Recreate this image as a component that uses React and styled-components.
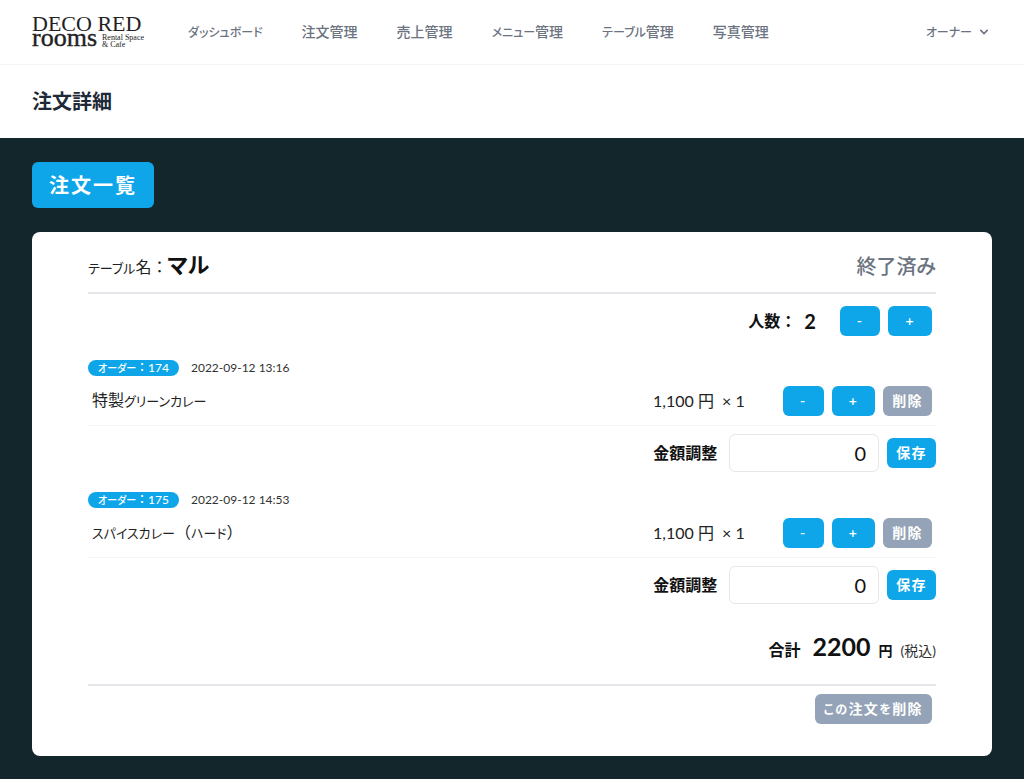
import React, { useState } from "react";
import styled, { createGlobalStyle } from "styled-components";

const menu = [
    "ダッシュボード",
    "注文管理",
    "売上管理",
    "メニュー管理",
    "テーブル管理",
    "写真管理",
];

const orderList = [
    { id: 174, date: "2022-09-12 13:16", name: "特製グリーンカレー", price: "1,100", count: 1 },
    { id: 175, date: "2022-09-12 14:53", name: "スパイスカレー（ハード）", price: "1,100", count: 1 },
];

// kana is set a little smaller than the kanji beside it
function Jp({ text, kana }) {
    return text.split(/([ぁ-んァ-ヶー]+|[：（）])/).filter(Boolean).map((part, i) => {
        if (/[：（）]/.test(part)) return <FullWidth key={i}>{part}</FullWidth>;
        if (/[ぁ-んァ-ヶー]/.test(part)) return <Kana $size={kana} key={i}>{part}</Kana>;
        return part;
    });
}

function Logo() {
    return (
        <LogoSvg width="116" height="34" viewBox="0 0 116 34" role="img" aria-label="DECO RED rooms">
            <text x="0" y="16" fontSize="22">DECO RED</text>
            <text x="0" y="31" fontSize="26" strokeWidth="0.4" stroke="#222">rooms</text>
            <text x="70" y="25" fontSize="8">Rental Space</text>
            <text x="70" y="32" fontSize="8">&amp; Cafe</text>
        </LogoSvg>
    );
}

function Order({ order }) {
    const [count, setCount] = useState(order.count);
    const [adjust, setAdjust] = useState("0");
    const inputId = `adjust-${order.id}`;

    return (
        <OrderItem>
            <Meta>
                <Badge><Jp text="オーダー：" kana={10} />{order.id}</Badge>
                <time>{order.date}</time>
            </Meta>
            <Line>
                <DishName><Jp text={order.name} kana={13} /></DishName>
                <Price>{order.price} 円 &nbsp;× {count}</Price>
                <ButtonGroup>
                    <Button type="button" onClick={() => setCount(Math.max(0, count - 1))}>-</Button>
                    <Button type="button" onClick={() => setCount(count + 1)}>+</Button>
                    <Button type="button" $gray $tight>削除</Button>
                </ButtonGroup>
            </Line>
            <AdjustForm onSubmit={(e) => e.preventDefault()}>
                <AdjustLabel htmlFor={inputId}>金額調整</AdjustLabel>
                <AdjustInput
                    id={inputId}
                    type="text"
                    inputMode="numeric"
                    value={adjust}
                    onChange={(e) => setAdjust(e.target.value)}
                />
                <Button type="submit" $tight>保存</Button>
            </AdjustForm>
        </OrderItem>
    );
}

function App() {
    const [people, setPeople] = useState(2);

    return (
        <Page>
            <GlobalStyle />
            <NavBar>
                <LogoLink href="#"><Logo /></LogoLink>
                <NavLinks>
                    {menu.map((item) => (
                        <NavLink href="#" key={item}><Jp text={item} kana={12} /></NavLink>
                    ))}
                </NavLinks>
                <UserButton type="button">
                    <span><Jp text="オーナー" kana={12} /></span>
                    <svg width="16" height="16" viewBox="0 0 20 20" fill="currentColor" aria-hidden="true">
                        <path
                            fillRule="evenodd"
                            clipRule="evenodd"
                            d="M5.293 7.293a1 1 0 011.414 0L10 10.586l3.293-3.293a1 1 0 111.414 1.414l-4 4a1 1 0 01-1.414 0l-4-4a1 1 0 010-1.414z"
                        />
                    </svg>
                </UserButton>
            </NavBar>
            <PageHeader>
                <PageTitle>注文詳細</PageTitle>
            </PageHeader>
            <Main>
                <ListButton type="button">注文一覧</ListButton>
                <Card>
                    <CardHead>
                        <TableLabel>
                            <Jp text="テーブル名：" kana={13} />
                            <TableName>マル</TableName>
                        </TableLabel>
                        <Status>終了済み</Status>
                    </CardHead>
                    <PeopleRow>
                        <PeopleLabel><Jp text="人数：" /></PeopleLabel>
                        <PeopleCount>{people}</PeopleCount>
                        <ButtonGroup>
                            <Button type="button" onClick={() => setPeople(Math.max(0, people - 1))}>-</Button>
                            <Button type="button" onClick={() => setPeople(people + 1)}>+</Button>
                        </ButtonGroup>
                    </PeopleRow>
                    <Orders>
                        {orderList.map((order) => (
                            <Order order={order} key={order.id} />
                        ))}
                    </Orders>
                    <TotalRow>
                        <TotalLabel>合計</TotalLabel>
                        <TotalPrice>2200</TotalPrice>
                        <TotalUnit>円</TotalUnit>
                        <TotalTax>(税込)</TotalTax>
                    </TotalRow>
                    <CardFoot>
                        <Button type="button" $gray $tight>
                            <Jp text="この注文を削除" kana={12} />
                        </Button>
                    </CardFoot>
                </Card>
            </Main>
        </Page>
    );
}

const GlobalStyle = createGlobalStyle`
  *, *::before, *::after {
    box-sizing: border-box;
  }
  body {
    margin: 0;
    background-color: #12262b;
    color: #111;
    font-family: Lato, "Noto Sans CJK JP", sans-serif;
    font-feature-settings: "palt";
    font-size: 16px;
    line-height: 24px;
  }
  button, input {
    font-family: inherit;
    font-feature-settings: inherit;
  }
`;

const Kana = styled.span`
  font-size: ${(props) => props.$size}px;
`;

const FullWidth = styled.span`
  font-feature-settings: normal;
`;

const Page = styled.div`
  min-height: 100vh;
  background-color: #12262b;
`;

const NavBar = styled.nav`
  display: flex;
  align-items: center;
  height: 65px;
  padding: 0 32px;
  background-color: #fff;
  border-bottom: 1px solid #f3f4f6;
`;

const LogoLink = styled.a`
  display: flex;
  margin-right: 40px;
`;

const LogoSvg = styled.svg`
  overflow: visible;
  fill: #222;
  font-family: "Liberation Serif", serif;
`;

const NavLinks = styled.div`
  display: flex;
  flex: 1;
  gap: 39px;
`;

const NavLink = styled.a`
  color: #6b7280;
  font-size: 14px;
  font-weight: 500;
  line-height: 20px;
  text-decoration: none;
  white-space: nowrap;
`;

const UserButton = styled.button`
  display: flex;
  align-items: center;
  gap: 4px;
  padding: 0;
  border: none;
  background: none;
  color: #6b7280;
  font-size: 14px;
  font-weight: 500;
  line-height: 20px;
  cursor: pointer;
`;

const PageHeader = styled.header`
  padding: 24px 32px;
  background-color: #fff;
`;

const PageTitle = styled.h2`
  margin: 0;
  color: #1f2937;
  font-size: 20px;
  font-weight: 600;
  line-height: 25px;
`;

const Main = styled.main`
  display: flex;
  flex-direction: column;
  align-items: flex-start;
  gap: 24px;
  padding: 24px 32px;
`;

const Button = styled.button`
  height: 30px;
  padding: 0 ${(props) => (props.$tight ? "8px" : "16px")};
  border: 1px solid transparent;
  border-radius: 6px;
  background-color: ${(props) => (props.$gray ? "#94a3b8" : "#0ea5e9")};
  color: #fff;
  font-size: 14px;
  font-weight: 600;
  letter-spacing: 0.1em;
  line-height: 20px;
  white-space: nowrap;
  cursor: pointer;
`;

const ListButton = styled(Button)`
  height: 46px;
  font-size: 20px;
`;

const Card = styled.section`
  width: 100%;
  padding: 16px 56px 32px;
  border-radius: 8px;
  background-color: #fff;
`;

const CardHead = styled.div`
  display: flex;
  align-items: center;
  justify-content: space-between;
  height: 46px;
  padding-bottom: 8px;
  border-bottom: 2px solid #e5e7eb;
`;

const TableLabel = styled.div`
  color: #222;
  font-size: 16px;
  line-height: 32px;
`;

const TableName = styled.span`
  color: #111;
  font-size: 22px;
  font-weight: 600;
`;

const Status = styled.div`
  color: #6b7280;
  font-size: 20px;
  font-weight: 500;
`;

const PeopleRow = styled.div`
  display: flex;
  align-items: center;
  justify-content: flex-end;
  padding: 12px 4px 24px 0;
  font-weight: 600;
`;

const PeopleLabel = styled.span`
  margin-right: 8px;
`;

const PeopleCount = styled.span`
  margin-right: 24px;
  font-size: 20px;
  font-weight: 700;
`;

const ButtonGroup = styled.div`
  display: flex;
  gap: 8px;
`;

const Orders = styled.ul`
  display: flex;
  flex-direction: column;
  gap: 20px;
  margin: 0;
  padding: 0;
  list-style: none;
`;

const OrderItem = styled.li`
  display: block;
`;

const Meta = styled.div`
  display: flex;
  align-items: center;
  gap: 12px;
  color: #333;
  font-size: 12px;
  line-height: 16px;
`;

const Badge = styled.span`
  height: 16px;
  padding: 0 10px;
  border-radius: 8px;
  background-color: #0ea5e9;
  color: #fff;
  font-weight: 500;
`;

const Line = styled.div`
  display: flex;
  align-items: center;
  height: 50px;
  padding: 0 4px;
  border-bottom: 1px solid #f3f4f6;
  color: #222;
`;

const DishName = styled.span`
  flex: 1;
`;

const Price = styled.span`
  width: 130px;
`;

const AdjustForm = styled.form`
  display: flex;
  align-items: center;
  justify-content: flex-end;
  gap: 8px;
  padding-top: 8px;
`;

const AdjustLabel = styled.label`
  margin-right: 4px;
  font-weight: 600;
`;

const AdjustInput = styled.input`
  width: 150px;
  height: 38px;
  padding: 0 12px;
  border: 1px solid #e5e7eb;
  border-radius: 6px;
  color: #111;
  font-size: 20px;
  text-align: right;
`;

const TotalRow = styled.div`
  display: flex;
  align-items: baseline;
  justify-content: flex-end;
  gap: 8px;
  padding: 24px 0 15px;
  line-height: 36px;
`;

const TotalLabel = styled.span`
  margin-right: 4px;
  font-weight: 600;
`;

const TotalPrice = styled.span`
  font-size: 25px;
  font-weight: 700;
`;

const TotalUnit = styled.span`
  font-size: 14px;
  font-weight: 600;
`;

const TotalTax = styled.span`
  color: #333;
  font-size: 14px;
`;

const CardFoot = styled.div`
  display: flex;
  justify-content: flex-end;
  padding: 8px 4px 0 0;
  border-top: 2px solid #e5e7eb;
`;

export default App;
